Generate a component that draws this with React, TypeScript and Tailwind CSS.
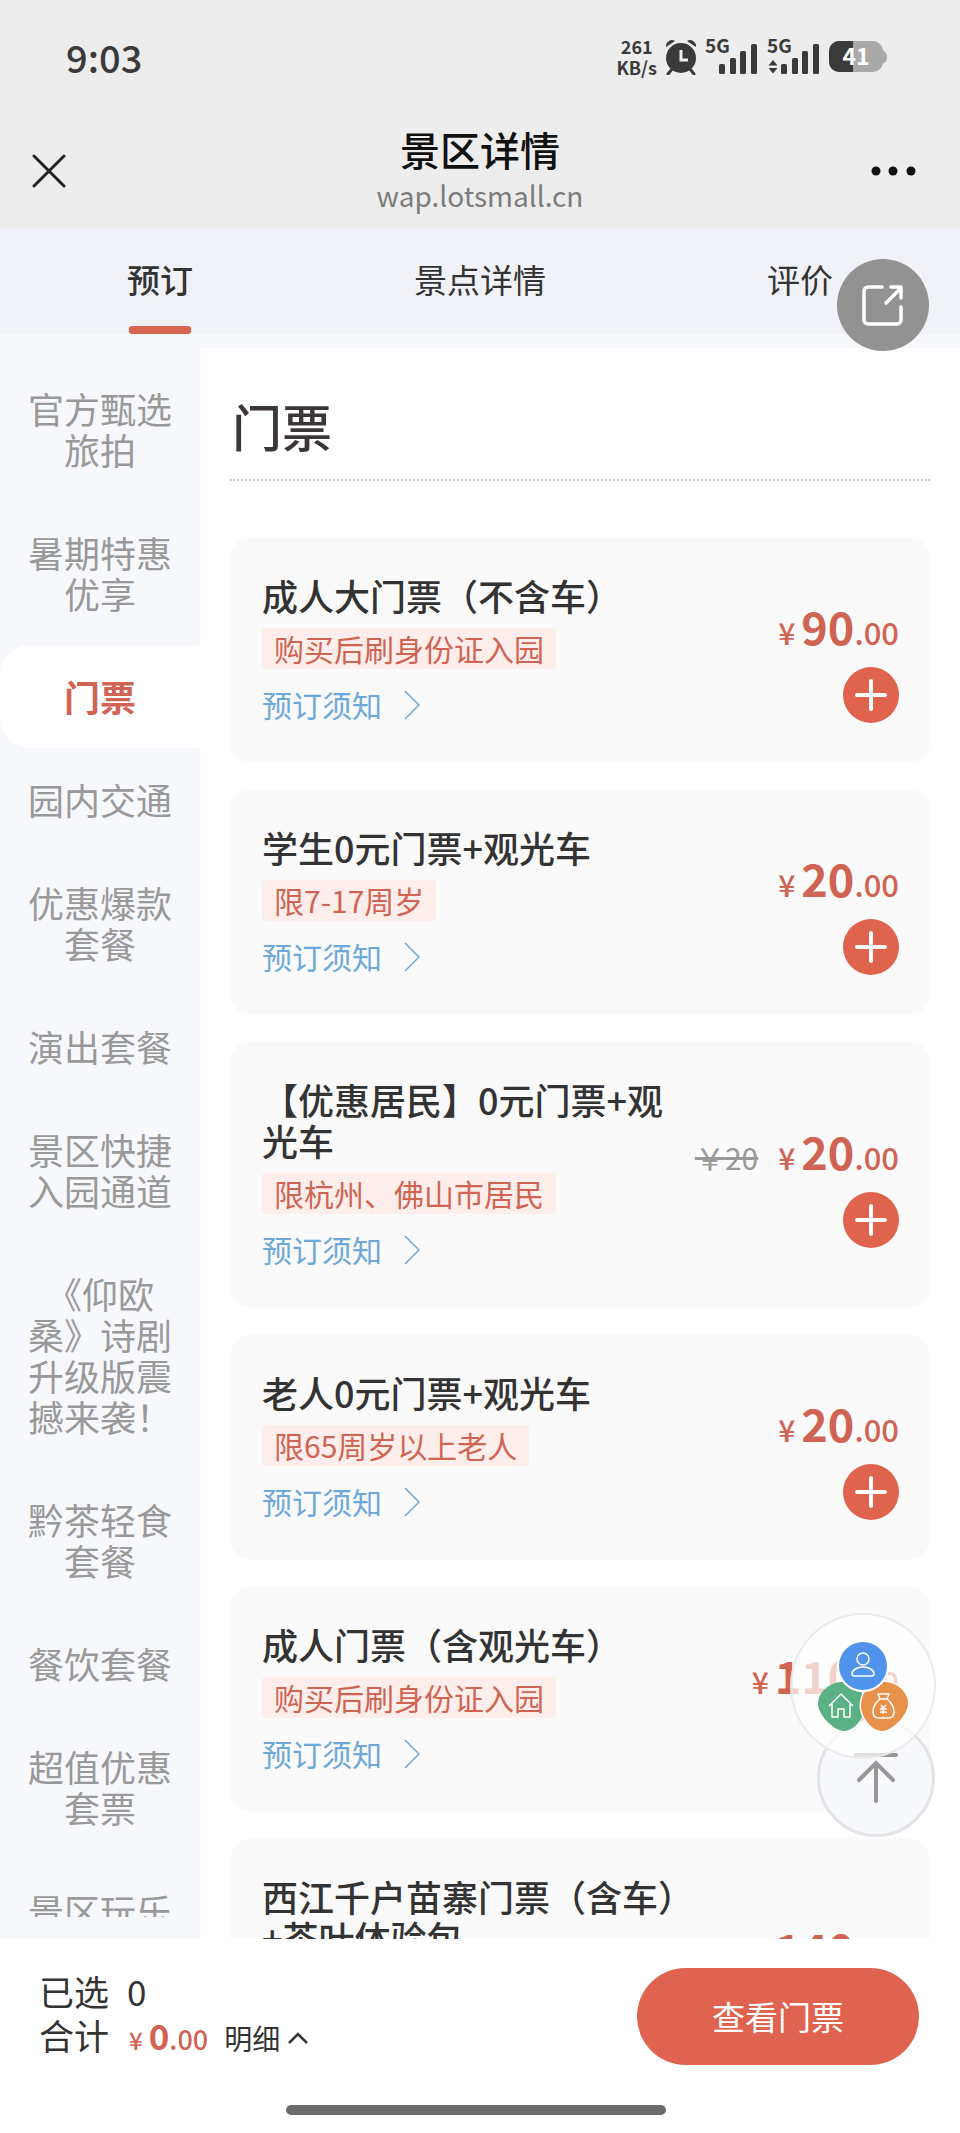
import { useState } from "react";
import clsx from "clsx";

const TABS = ["预订", "景点详情", "评价"];

const CATEGORIES = [
  "官方甄选旅拍",
  "暑期特惠优享",
  "门票",
  "园内交通",
  "优惠爆款套餐",
  "演出套餐",
  "景区快捷入园通道",
  "《仰欧桑》诗剧升级版震撼来袭！",
  "黔茶轻食套餐",
  "餐饮套餐",
  "超值优惠套票",
  "景区玩乐",
];

type Ticket = {
  name: string;
  tag: string;
  price: number;
  original?: number;
};

const TICKETS: Ticket[] = [
  { name: "成人大门票（不含车）", tag: "购买后刷身份证入园", price: 90 },
  { name: "学生0元门票+观光车", tag: "限7-17周岁", price: 20 },
  { name: "【优惠居民】0元门票+观光车", tag: "限杭州、佛山市居民", price: 20, original: 20 },
  { name: "老人0元门票+观光车", tag: "限65周岁以上老人", price: 20 },
  { name: "成人门票（含观光车）", tag: "购买后刷身份证入园", price: 110 },
  { name: "西江千户苗寨门票（含车）+茶叶体验包", tag: "购买后刷身份证入园", price: 140 },
];

const AlarmIcon = () => (
  <svg width="32" height="36" viewBox="0 0 32 36" fill="#3a3a3a">
    <path d="M1 8a6 6 0 0 1 9-6zM31 8a6 6 0 0 0-9-6z" />
    <path d="M7 30l-4 5M25 30l4 5" stroke="#3a3a3a" strokeWidth="3" strokeLinecap="round" />
    <circle cx="16" cy="19" r="15" />
    <path d="M16 11v10h7" fill="none" stroke="#ededed" strokeWidth="3" />
  </svg>
);

const SignalIcon = ({ withArrows }: { withArrows?: boolean }) => (
  <svg className="overflow-visible" width="54" height="36" viewBox="0 0 54 36" fill="#3a3a3a">
    <text x="0" y="14" fontSize="19" fontWeight="700">
      5G
    </text>
    {withArrows && <path d="M6 21l4.500 5.500h-9zM6 34.500l4.500-5.500h-9z" />}
    <rect x="14" y="25" width="6" height="10" rx="1.500" />
    <rect x="25" y="19" width="6" height="16" rx="1.500" />
    <rect x="35" y="12" width="6" height="23" rx="1.500" />
    <rect x="46" y="5" width="6" height="30" rx="1.500" />
  </svg>
);

const BatteryIcon = () => (
  <svg className="overflow-visible" width="58" height="32" viewBox="0 0 58 32">
    <path d="M53 9c3 1 5 3 5 7s-2 6-5 7z" fill="#a9a9a9" />
    <rect x="0" y="0" width="54" height="31" rx="10" fill="#a9a9a9" />
    <path d="M24 0H10A10 10 0 0 0 0 10v11a10 10 0 0 0 10 10h14z" fill="#3a3a3a" />
    <text x="27" y="24" fontSize="23" fontWeight="700" fill="#fff" textAnchor="middle">
      41
    </text>
  </svg>
);

const StatusBar = () => (
  <div className="flex h-[114px] items-center justify-between pr-[73px] pl-[66px] text-[#3a3a3a]">
    <span className="text-[38px] leading-[40px] font-medium">9:03</span>
    <div className="flex items-center gap-2">
      <div className="text-center text-[18px] leading-[21px] font-bold">
        <div>261</div>
        <div>KB/s</div>
      </div>
      <AlarmIcon />
      <SignalIcon />
      <SignalIcon withArrows />
      <BatteryIcon />
    </div>
  </div>
);

const TitleBar = () => (
  <div className="flex h-[114px] items-center justify-between px-8">
    <button aria-label="关闭" className="w-[60px]">
      <svg width="34" height="34" viewBox="0 0 34 34" stroke="#222" strokeWidth="3" strokeLinecap="round">
        <path d="M2 2l30 30M32 2L2 32" />
      </svg>
    </button>
    <div className="text-center">
      <h1 className="text-[40px] leading-[48px] font-medium text-[#111]">景区详情</h1>
      <p className="text-[28px] leading-[44px] text-[#7c7c7c]">wap.lotsmall.cn</p>
    </div>
    <button aria-label="更多" className="flex w-[60px] justify-end">
      <svg width="60" height="12" viewBox="0 0 60 12" fill="#111">
        <circle cx="8" cy="6" r="4.500" />
        <circle cx="25" cy="6" r="4.500" />
        <circle cx="43" cy="6" r="4.500" />
      </svg>
    </button>
  </div>
);

const Price = ({ value, small }: { value: number; small?: boolean }) => (
  <span className="flex items-baseline font-medium text-[#d06453]">
    <span className={clsx("mr-1.5", small ? "text-[24px]" : "text-[30px]")}>¥</span>
    <span className={clsx("font-bold", small ? "text-[35px]" : "text-[45px]")}>{value}</span>
    <span className={small ? "text-[27px]" : "text-[31px]"}>.00</span>
  </span>
);

const TicketCard = ({ ticket, onAdd }: { ticket: Ticket; onAdd: () => void }) => (
  <li className="flex items-center justify-between rounded-[22px] bg-[#fafafa] pt-[38px] pr-[31px] pb-[38px] pl-8">
    <div className="max-w-[434px] flex-1">
      <h3 className="text-[36px] leading-[41px] font-medium text-[#333]">{ticket.name}</h3>
      <div className="mt-3 flex">
        <span className="rounded-[4px] bg-[#fdeeeb] px-3 text-[30px] leading-[41px] text-[#d06453]">
          {ticket.tag}
        </span>
      </div>
      <a href="#notice" className="mt-[15px] flex items-center text-[30px] leading-[41px] text-[#6ea8d8]">
        预订须知
        <svg className="ml-[22px]" width="16" height="30" viewBox="0 0 16 30" fill="none" stroke="#6ea8d8">
          <path d="M1 1l14 14L1 29" strokeWidth="1.500" />
        </svg>
      </a>
    </div>
    <div className="flex shrink-0 flex-col items-end pt-5">
      <div className="flex h-[58px] items-baseline gap-5 leading-[58px]">
        {ticket.original && <del className="text-[30px] text-[#999]">￥{ticket.original}</del>}
        <Price value={ticket.price} />
      </div>
      <button
        aria-label="添加"
        onClick={onAdd}
        className="mt-3 flex size-14 items-center justify-center rounded-full bg-[#e0634e]"
      >
        <svg width="34" height="34" viewBox="0 0 34 34" stroke="#fff" strokeWidth="4" strokeLinecap="round">
          <path d="M17 3v28M3 17h28" />
        </svg>
      </button>
    </div>
  </li>
);

const ShareButton = () => (
  <button
    aria-label="分享"
    className="absolute top-[259px] right-[31px] flex size-[92px] items-center justify-center rounded-full bg-[#929293]"
  >
    <svg
      width="42"
      height="42"
      viewBox="0 0 42 42"
      fill="none"
      stroke="#fff"
      strokeWidth="3.500"
      strokeLinejoin="round"
      strokeLinecap="round"
    >
      <path d="M20 3H6a4 4 0 0 0-4 4v29a4 4 0 0 0 4 4h29a4 4 0 0 0 4-4V23" />
      <path d="M24 19L39 4M29 3h10v11" />
    </svg>
  </button>
);

const BackToTop = () => (
  <button
    aria-label="返回顶部"
    className="absolute right-[25px] bottom-[296px] flex size-[118px] items-center justify-center rounded-full border-[3px] border-[#e2e3e6] bg-[#f6f8fb]"
  >
    <svg width="44" height="52" viewBox="0 0 44 52" fill="none" stroke="#979797" strokeWidth="4" strokeLinecap="round">
      <path d="M2 3h40M22 11v38M5 28l17-17 17 17" />
    </svg>
  </button>
);

const QuickMenu = () => (
  <button
    aria-label="快捷菜单"
    className="absolute right-[24px] bottom-[374px] size-[146px] rounded-full border-2 border-[#e6e6e6]/80 bg-white/70"
  >
    <svg viewBox="0 0 142 142" fill="none">
      <path d="M26 89c0-12 12-22 24-22 13 0 23 10 23 24 0 10-10 25-21 25S26 99 26 89z" fill="#5bb085" />
      <path
        d="M116 89c0-12-11-22-24-22s-23 10-23 24c0 10 10 25 21 25s26-17 26-27z"
        fill="#e8914a"
        stroke="#fff"
        strokeWidth="3"
        paintOrder="stroke"
      />
      <circle cx="71" cy="51" r="24" fill="#4f93ec" stroke="#fff" strokeWidth="4" paintOrder="stroke" />
      <g stroke="#fff" strokeWidth="1.500" strokeLinejoin="round">
        <circle cx="71" cy="44" r="6" />
        <path d="M60 59c0-4 5-7 11-7s11 3 11 7c0 2-2 2-3 2H63c-1 0-3 0-3-2z" />
        <path d="M37 91l12-12 12 12M40 89v13h6v-8h6v8h6V89" />
        <path d="M86 79h11l-2 5h-7zM88 84c-5 4-7 8-7 13 0 4 2 6 6 6h9c4 0 6-2 6-6 0-5-2-9-7-13" />
        <path d="M89 90l2 3 3-3M91 93v6M88 94h7M88 97h7" />
      </g>
    </svg>
  </button>
);

const BottomBar = ({ count }: { count: number }) => (
  <footer className="shrink-0 bg-white">
    <div className="flex items-center justify-between pt-[29px] pr-[41px] pl-[39px]">
      <div className="pb-2 text-[35px] leading-[44px] text-[#333]">
        <div className="flex gap-[18px]">
          <span>已选</span>
          <span>{count}</span>
        </div>
        <div className="flex h-11 items-baseline">
          <span>合计</span>
          <span className="ml-5">
            <Price value={0} small />
          </span>
          <button className="ml-4 flex items-center gap-2 text-[28px]">
            明细
            <svg width="20" height="12" viewBox="0 0 20 12" fill="none" stroke="#333" strokeWidth="2.500">
              <path d="M1 11l9-9 9 9" />
            </svg>
          </button>
        </div>
      </div>
      <button className="h-[97px] w-[282px] rounded-full bg-[#df634f] text-[33px] text-white">查看门票</button>
    </div>
    <div className="flex justify-center pt-10 pr-2 pb-[18px]">
      <div className="h-[10px] w-[380px] rounded-full bg-[#6b6b6b]" />
    </div>
  </footer>
);

const App = () => {
  const [tab, setTab] = useState("预订");
  const [category, setCategory] = useState("门票");
  const [count, setCount] = useState(0);

  return (
    <div className="relative flex h-dvh flex-col overflow-hidden bg-white font-['Noto_Sans_CJK_SC',sans-serif]">
      <header className="shrink-0 bg-[#ededed]">
        <StatusBar />
        <TitleBar />
      </header>

      <nav className="grid h-[106px] shrink-0 grid-cols-3 bg-[#f0f2f7]">
        {TABS.map((name) => (
          <button
            key={name}
            onClick={() => setTab(name)}
            className="flex flex-col items-center justify-between pt-[30px] text-[33px] leading-[42px] text-[#333]"
          >
            <span className={clsx(tab === name && "font-medium")}>{name}</span>
            {tab === name && <span className="h-2 w-[62px] rounded-[3px] bg-[#d76653]" />}
          </button>
        ))}
      </nav>

      <div className="flex min-h-0 flex-1 bg-[#f7f8fc]">
        <aside className="mb-[22px] w-[200px] shrink-0 overflow-y-auto pt-[23px] [scrollbar-width:none]">
          {CATEGORIES.map((name) => (
            <button
              key={name}
              onClick={() => setCategory(name)}
              className={clsx(
                "block w-full rounded-l-[30px] px-7 py-[31px] text-[36px] leading-[41px]",
                category === name ? "bg-white font-bold text-[#d06453]" : "text-[#999]"
              )}
            >
              {name}
            </button>
          ))}
        </aside>

        <main className="mt-[14px] flex-1 overflow-y-auto bg-white px-[30px] [scrollbar-width:none]">
          <h2 className="border-b-2 border-dotted border-[#ccc] pt-[47px] pb-6 pl-0.5 text-[50px] leading-[60px] font-medium text-[#3c3636]">
            门票
          </h2>
          <ul className="mt-14 flex flex-col gap-[26px]">
            {TICKETS.map((ticket) => (
              <TicketCard key={ticket.name} ticket={ticket} onAdd={() => setCount(count + 1)} />
            ))}
          </ul>
        </main>
      </div>

      <BottomBar count={count} />

      <ShareButton />
      <BackToTop />
      <QuickMenu />
    </div>
  );
};

export default App;
